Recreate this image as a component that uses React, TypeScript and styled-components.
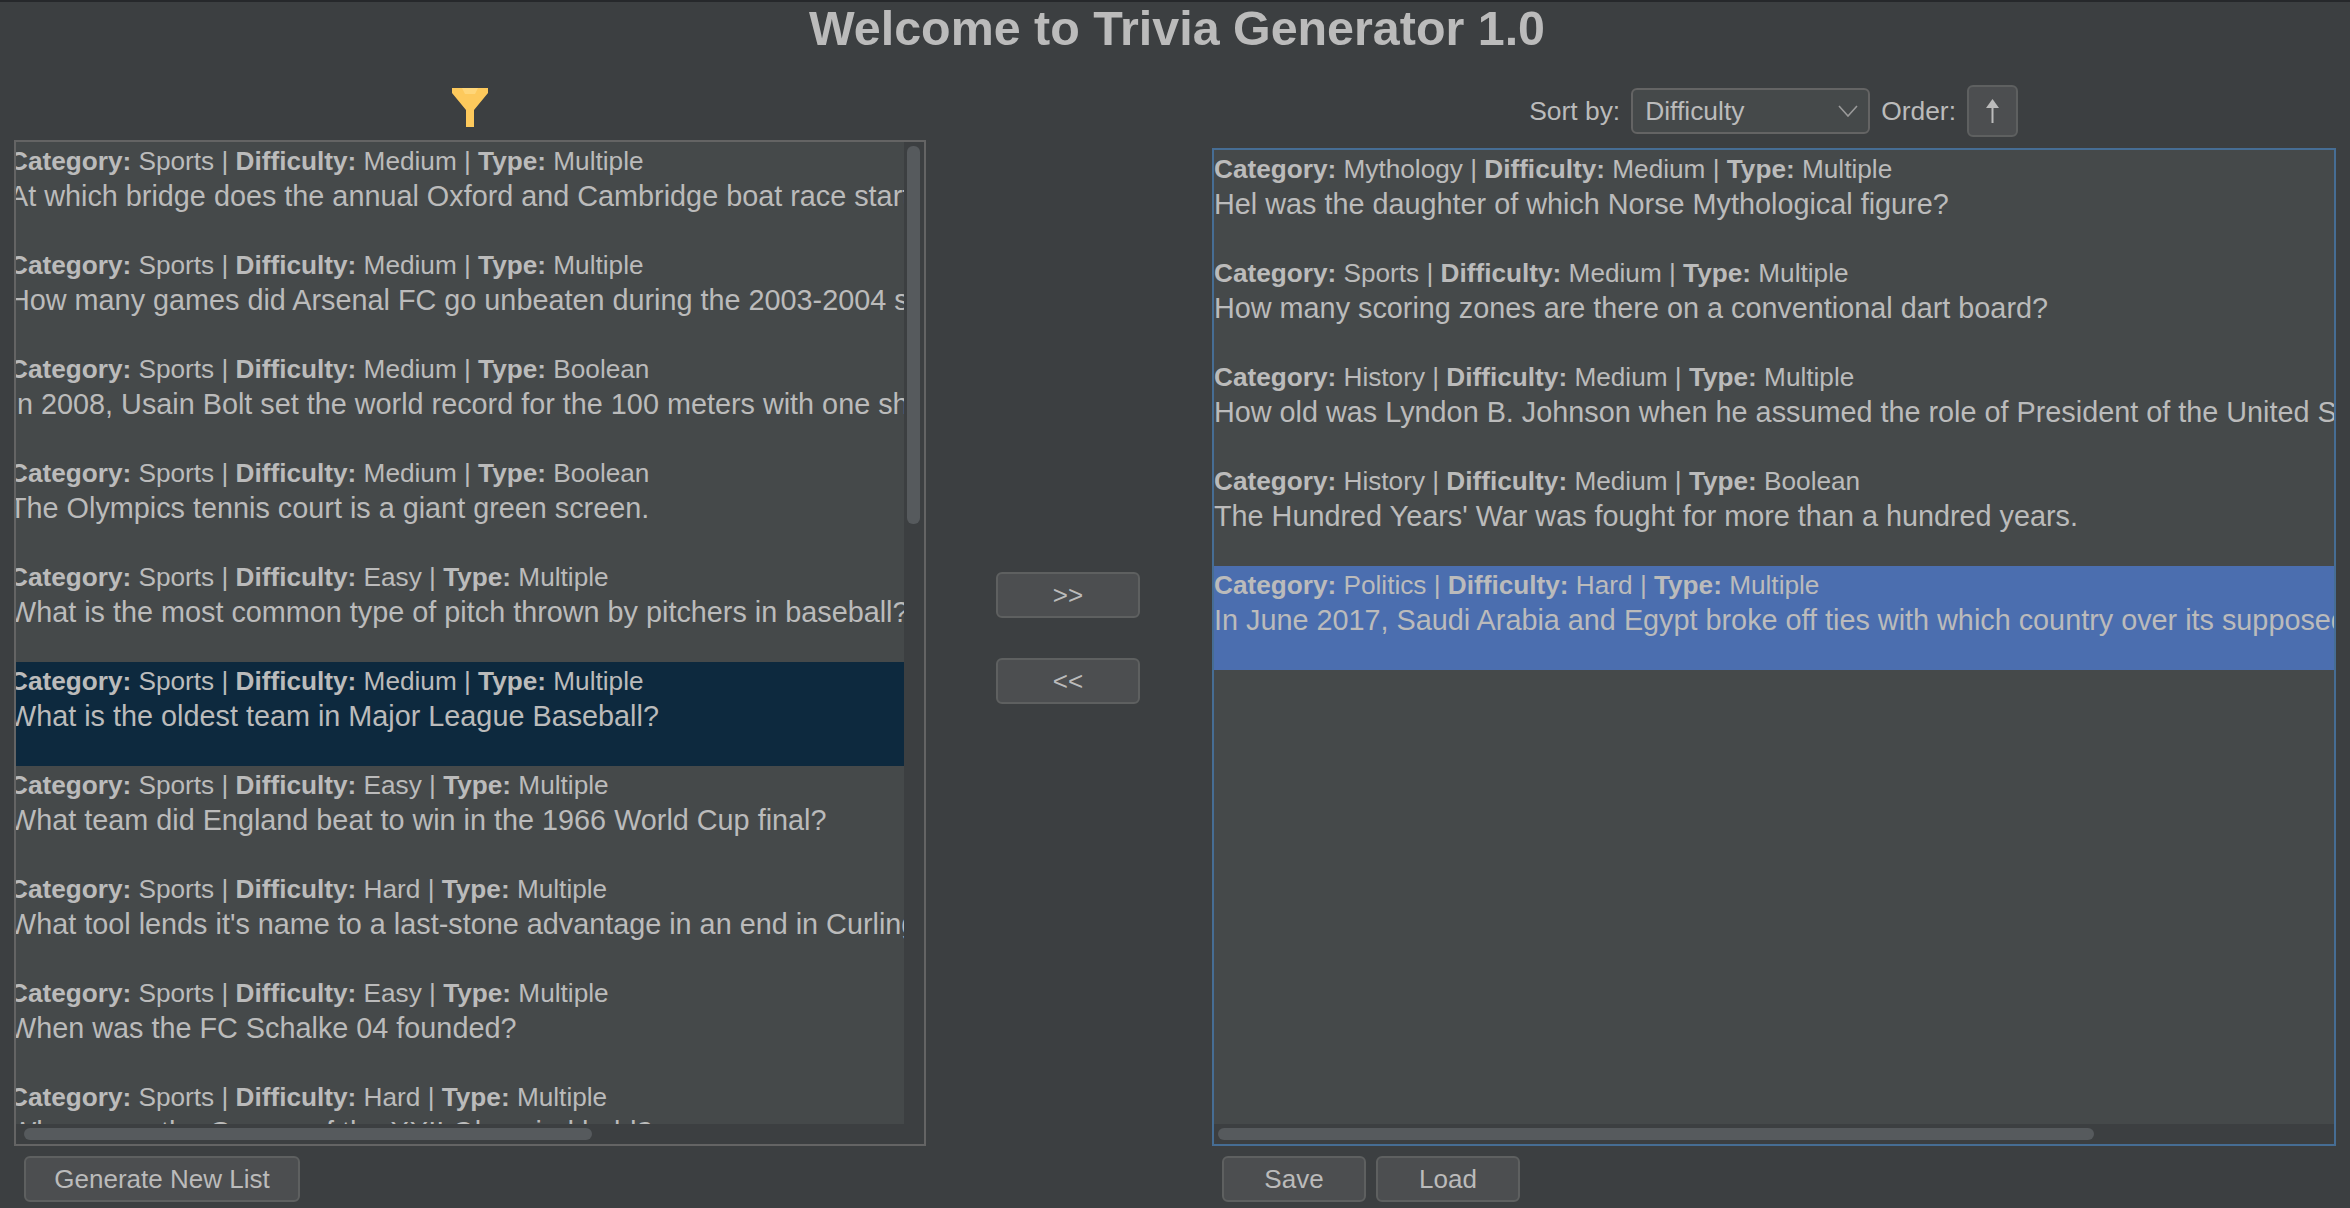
import styled, { createGlobalStyle } from "styled-components";

interface Question {
	category: string;
	difficulty: string;
	type: string;
	text: string;
}

const generated: Question[] = [
	{ category: "Sports", difficulty: "Medium", type: "Multiple", text: "At which bridge does the annual Oxford and Cambridge boat race start?" },
	{ category: "Sports", difficulty: "Medium", type: "Multiple", text: "How many games did Arsenal FC go unbeaten during the 2003-2004 season?" },
	{ category: "Sports", difficulty: "Medium", type: "Boolean", text: "In 2008, Usain Bolt set the world record for the 100 meters with one shoelace untied." },
	{ category: "Sports", difficulty: "Medium", type: "Boolean", text: "The Olympics tennis court is a giant green screen." },
	{ category: "Sports", difficulty: "Easy", type: "Multiple", text: "What is the most common type of pitch thrown by pitchers in baseball?" },
	{ category: "Sports", difficulty: "Medium", type: "Multiple", text: "What is the oldest team in Major League Baseball?" },
	{ category: "Sports", difficulty: "Easy", type: "Multiple", text: "What team did England beat to win in the 1966 World Cup final?" },
	{ category: "Sports", difficulty: "Hard", type: "Multiple", text: "What tool lends it's name to a last-stone advantage in an end in Curling?" },
	{ category: "Sports", difficulty: "Easy", type: "Multiple", text: "When was the FC Schalke 04 founded?" },
	{ category: "Sports", difficulty: "Hard", type: "Multiple", text: "Where was the Games of the XXII Olympiad held?" },
];

const saved: Question[] = [
	{ category: "Mythology", difficulty: "Medium", type: "Multiple", text: "Hel was the daughter of which Norse Mythological figure?" },
	{ category: "Sports", difficulty: "Medium", type: "Multiple", text: "How many scoring zones are there on a conventional dart board?" },
	{ category: "History", difficulty: "Medium", type: "Multiple", text: "How old was Lyndon B. Johnson when he assumed the role of President of the United States?" },
	{ category: "History", difficulty: "Medium", type: "Boolean", text: "The Hundred Years' War was fought for more than a hundred years." },
	{ category: "Politics", difficulty: "Hard", type: "Multiple", text: "In June 2017, Saudi Arabia and Egypt broke off ties with which country over its supposed support for terrorism?" },
];

const GlobalStyle = createGlobalStyle`
	html, body {
		margin: 0;
		padding: 0;
		background: #3c3f41;
	}
	body {
		font-family: "Liberation Sans", Arial, sans-serif;
		color: #bbbbbb;
	}
`;

const Page = styled.div`
	width: 2350px;
	height: 1208px;
	box-sizing: border-box;
	border-top: 2px solid #26282b;
	background: #3c3f41;
	display: flex;
	flex-direction: column;
	overflow: hidden;
`;

const Title = styled.h1`
	margin: 0;
	height: 54px;
	padding-left: 4px;
	line-height: 52px;
	text-align: center;
	font-size: 48.4px;
	font-weight: 700;
`;

const Columns = styled.div`
	flex: 1;
	display: grid;
	grid-template-columns: 912px 1fr 1124px;
	padding: 0 14px;
	min-height: 0;
`;

const Column = styled.div`
	display: flex;
	flex-direction: column;
	min-width: 0;
`;

const FilterBar = styled.div`
	height: 84px;
	box-sizing: border-box;
	padding-top: 32px;
	display: flex;
	justify-content: center;
	align-items: flex-start;
`;

const SortBar = styled.div`
	height: 92px;
	box-sizing: border-box;
	padding: 18px 318px 0 0;
	display: flex;
	justify-content: flex-end;
	align-items: center;
	font-size: 26.4px;
	gap: 11px;
`;

const SortSelect = styled.div`
	width: 239px;
	height: 46px;
	box-sizing: border-box;
	padding: 0 10px 0 12px;
	display: flex;
	align-items: center;
	justify-content: space-between;
	background: #45494a;
	border: 2px solid #646464;
	border-radius: 6px;
`;

const OrderButton = styled.div`
	width: 51px;
	height: 52px;
	box-sizing: border-box;
	display: flex;
	align-items: center;
	justify-content: center;
	background: #4c4e50;
	border: 2px solid #5e6060;
	border-radius: 6px;
`;

const ListPanel = styled.div<{ $focused?: boolean }>`
	width: 100%;
	height: ${(p) => (p.$focused ? 998 : 1006)}px;
	box-sizing: border-box;
	border: 2px solid ${(p) => (p.$focused ? "#466d94" : "#646464")};
	display: flex;
	flex-direction: column;
`;

const ListBody = styled.div`
	flex: 1;
	min-height: 0;
	display: flex;
`;

const Viewport = styled.div`
	flex: 1;
	min-width: 0;
	background: #45494a;
	overflow: hidden;
`;

const RowList = styled.ul<{ $scrolled?: boolean }>`
	list-style: none;
	margin: 0;
	padding: 0;
	& > li {
		padding-left: 0;
		text-indent: ${(p) => (p.$scrolled ? -7 : 0)}px;
	}
`;

const Row = styled.li<{ $highlight?: string }>`
	height: 104px;
	box-sizing: border-box;
	padding-top: 2px;
	white-space: nowrap;
	background: ${(p) => p.$highlight ?? "transparent"};
`;

const Meta = styled.div`
	font-size: 26.2px;
	line-height: 35px;
	& b {
		font-weight: 700;
	}
`;

const QuestionText = styled.div`
	font-size: 28.8px;
	line-height: 35px;
`;

const VerticalTrack = styled.div`
	width: 20px;
	flex: none;
	padding: 4px 4px 0 3px;
	box-sizing: border-box;
`;

const VerticalThumb = styled.div`
	width: 13px;
	height: 378px;
	background: #565a5d;
	border-radius: 6px;
`;

const HorizontalTrack = styled.div`
	height: 20px;
	flex: none;
	box-sizing: border-box;
	padding: 4px 0 0;
`;

const HorizontalThumb = styled.div<{ $offset: number; $length: number }>`
	height: 12px;
	margin-left: ${(p) => p.$offset}px;
	width: ${(p) => p.$length}px;
	background: #565a5d;
	border-radius: 6px;
`;

const MiddleColumn = styled.div`
	display: flex;
	flex-direction: column;
	align-items: center;
	gap: 40px;
	padding: 516px 2px 0 0;
`;

const Button = styled.button<{ $width: number }>`
	width: ${(p) => p.$width}px;
	height: 46px;
	box-sizing: border-box;
	padding: 0;
	background: #4c4e50;
	border: 2px solid #5e6060;
	border-radius: 6px;
	color: #bbbbbb;
	font-family: "Liberation Sans", Arial, sans-serif;
	font-size: 26px;
	line-height: 1;
`;

const ButtonBar = styled.div`
	display: flex;
	gap: 10px;
	padding: 10px 0 0 10px;
`;

const QuestionRow = ({ question, highlight }: { question: Question; highlight?: string }) => (
	<Row $highlight={highlight}>
		<Meta>
			<b>Category:</b> {question.category} | <b>Difficulty:</b> {question.difficulty} | <b>Type:</b> {question.type}
		</Meta>
		<QuestionText>{question.text}</QuestionText>
	</Row>
);

const FunnelIcon = () => (
	<svg width="36" height="39" viewBox="0 0 36 39">
		<path d="M0 0H36V5L22 22V39H14V22L0 5Z" fill="#fdc95c" />
		<path d="M10 0H26L23 6H13Z" fill="#ffd679" />
	</svg>
);

const ArrowUpIcon = () => (
	<svg width="15" height="24" viewBox="0 0 15 24">
		<path d="M7.5 24V6" stroke="#bbbbbb" strokeWidth="2" />
		<path d="M7.5 0L14 9H1Z" fill="#bbbbbb" />
	</svg>
);

const SelectChevron = () => (
	<svg width="20" height="12" viewBox="0 0 20 12" fill="none">
		<path d="M1 1L10 11L19 1" stroke="#9a9a9a" strokeWidth="1.6" />
	</svg>
);

export default function App() {
	return (
		<Page>
			<GlobalStyle />
			<Title>Welcome to Trivia Generator 1.0</Title>
			<Columns>
				<Column>
					<FilterBar>
						<FunnelIcon />
					</FilterBar>
					<ListPanel>
						<ListBody>
							<Viewport>
								<RowList $scrolled>
									{generated.map((q, i) => (
										<QuestionRow key={i} question={q} highlight={i === 5 ? "#0d293e" : undefined} />
									))}
								</RowList>
							</Viewport>
							<VerticalTrack>
								<VerticalThumb />
							</VerticalTrack>
						</ListBody>
						<HorizontalTrack>
							<HorizontalThumb $offset={8} $length={568} />
						</HorizontalTrack>
					</ListPanel>
					<ButtonBar>
						<Button $width={276}>Generate New List</Button>
					</ButtonBar>
				</Column>
				<MiddleColumn>
					<Button $width={144}>&gt;&gt;</Button>
					<Button $width={144}>&lt;&lt;</Button>
				</MiddleColumn>
				<Column>
					<SortBar>
						<span>Sort by:</span>
						<SortSelect>
							Difficulty
							<SelectChevron />
						</SortSelect>
						<span>Order:</span>
						<OrderButton>
							<ArrowUpIcon />
						</OrderButton>
					</SortBar>
					<ListPanel $focused>
						<ListBody>
							<Viewport>
								<RowList>
									{saved.map((q, i) => (
										<QuestionRow key={i} question={q} highlight={i === 4 ? "#4b6eaf" : undefined} />
									))}
								</RowList>
							</Viewport>
						</ListBody>
						<HorizontalTrack>
							<HorizontalThumb $offset={4} $length={876} />
						</HorizontalTrack>
					</ListPanel>
					<ButtonBar>
						<Button $width={144}>Save</Button>
						<Button $width={144}>Load</Button>
					</ButtonBar>
				</Column>
			</Columns>
		</Page>
	);
}
